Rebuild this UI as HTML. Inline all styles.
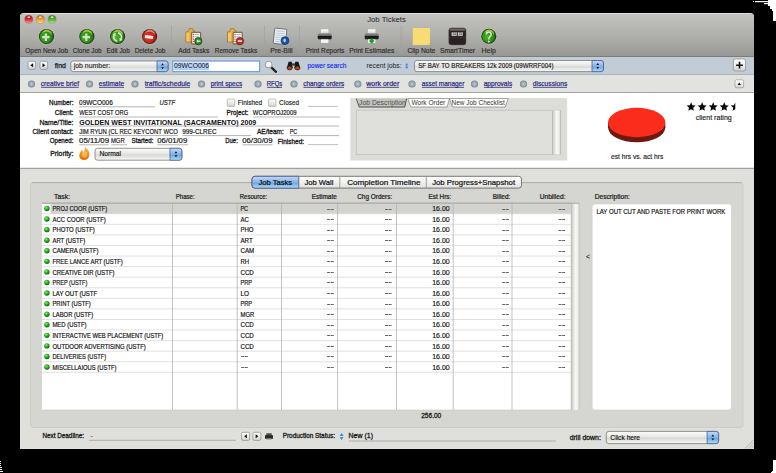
<!DOCTYPE html>
<html><head><meta charset="utf-8"><title>Job Tickets</title>
<style>
html,body{margin:0;padding:0;background:#000;width:776px;height:473px;overflow:hidden}
svg{display:block}
text{font-family:"Liberation Sans",sans-serif}
</style></head>
<body>
<svg width="776" height="473" viewBox="0 0 776 473">
<defs>

<linearGradient id="gTool" x1="0" y1="0" x2="0" y2="1">
  <stop offset="0" stop-color="#c3c3bf"/><stop offset="0.5" stop-color="#b1b1ad"/><stop offset="1" stop-color="#979793"/>
</linearGradient>
<linearGradient id="gRed" x1="0" y1="0" x2="0" y2="1">
  <stop offset="0" stop-color="#a01010"/><stop offset="0.5" stop-color="#e02a2a"/><stop offset="1" stop-color="#ff9a9a"/>
</linearGradient>
<linearGradient id="gOrg" x1="0" y1="0" x2="0" y2="1">
  <stop offset="0" stop-color="#b06008"/><stop offset="0.5" stop-color="#eea030"/><stop offset="1" stop-color="#ffe07a"/>
</linearGradient>
<linearGradient id="gGrn" x1="0" y1="0" x2="0" y2="1">
  <stop offset="0" stop-color="#2e7a14"/><stop offset="0.5" stop-color="#5cae38"/><stop offset="1" stop-color="#b0e888"/>
</linearGradient>
<radialGradient id="gBall" cx="0.4" cy="0.55" r="0.65">
  <stop offset="0" stop-color="#4cb828"/><stop offset="0.6" stop-color="#2c9214"/><stop offset="1" stop-color="#16600a"/>
</radialGradient>
<radialGradient id="gBallR" cx="0.4" cy="0.55" r="0.65">
  <stop offset="0" stop-color="#e8483a"/><stop offset="0.6" stop-color="#c8221a"/><stop offset="1" stop-color="#801008"/>
</radialGradient>
<linearGradient id="gBtn" x1="0" y1="0" x2="0" y2="1">
  <stop offset="0" stop-color="#ffffff"/><stop offset="0.5" stop-color="#ececea"/><stop offset="1" stop-color="#d2d2d0"/>
</linearGradient>
<linearGradient id="gPop" x1="0" y1="0" x2="0" y2="1">
  <stop offset="0" stop-color="#fdfdfd"/><stop offset="0.45" stop-color="#e6e6e3"/><stop offset="0.55" stop-color="#d9d9d6"/><stop offset="1" stop-color="#f8f8f8"/>
</linearGradient>
<linearGradient id="gStep" x1="0" y1="0" x2="0" y2="1">
  <stop offset="0" stop-color="#c6dcf6"/><stop offset="0.45" stop-color="#8ab4e6"/><stop offset="0.55" stop-color="#6fa0de"/><stop offset="1" stop-color="#b6e2fa"/>
</linearGradient>
<linearGradient id="gSeg" x1="0" y1="0" x2="0" y2="1">
  <stop offset="0" stop-color="#ffffff"/><stop offset="0.5" stop-color="#f0f0ee"/><stop offset="1" stop-color="#e2e2e0"/>
</linearGradient>
<linearGradient id="gSegB" x1="0" y1="0" x2="0" y2="1">
  <stop offset="0" stop-color="#c4dcf6"/><stop offset="0.45" stop-color="#8ab8ec"/><stop offset="0.6" stop-color="#74a8e4"/><stop offset="0.9" stop-color="#9ad4f4"/><stop offset="1" stop-color="#c0f4ff"/>
</linearGradient>
<linearGradient id="gScroll" x1="0" y1="0" x2="1" y2="0">
  <stop offset="0" stop-color="#b0b0ac"/><stop offset="0.18" stop-color="#d4d4d0"/><stop offset="0.55" stop-color="#f8f8f6"/><stop offset="0.85" stop-color="#ececea"/><stop offset="1" stop-color="#b4b4b0"/>
</linearGradient>
<radialGradient id="gLink" cx="0.5" cy="0.5" r="0.55">
  <stop offset="0" stop-color="#d4dae0"/><stop offset="0.3" stop-color="#a8b4c0"/><stop offset="0.75" stop-color="#8896a6"/><stop offset="1" stop-color="#687484"/>
</radialGradient>
<radialGradient id="gDot" cx="0.4" cy="0.35" r="0.65">
  <stop offset="0" stop-color="#9af07a"/><stop offset="0.5" stop-color="#22b01a"/><stop offset="1" stop-color="#0a6a08"/>
</radialGradient>
<linearGradient id="gFlame" x1="0" y1="0" x2="0" y2="1">
  <stop offset="0" stop-color="#ffc060"/><stop offset="0.6" stop-color="#f08a1a"/><stop offset="1" stop-color="#d86a0a"/>
</linearGradient>

<linearGradient id="gPaper" x1="0" y1="0" x2="0" y2="1"><stop offset="0" stop-color="#ffffff"/><stop offset="1" stop-color="#d0d0ce"/></linearGradient>
<linearGradient id="gPrn" x1="0" y1="0" x2="0" y2="1"><stop offset="0" stop-color="#909090"/><stop offset="0.42" stop-color="#666666"/><stop offset="0.52" stop-color="#121212"/><stop offset="0.85" stop-color="#262626"/><stop offset="1" stop-color="#505050"/></linearGradient>
</defs>
<rect x="0" y="0" width="776" height="473" fill="#000" />
<rect x="753" y="1" width="1" height="1" fill="#fff" />
<rect x="755" y="1" width="13" height="1.2" fill="#fff" />
<rect x="764" y="3" width="4" height="1.2" fill="#fff" />
<path d="M768,0 H776 V21 H773 V11 H772 V9 H770 V6 H768 Z" fill="#fff"/>
<rect x="0" y="461" width="1" height="1" fill="#fff" />
<rect x="0" y="463" width="1" height="1" fill="#fff" />
<rect x="0" y="465" width="1" height="1" fill="#fff" />
<rect x="0" y="467" width="2" height="1" fill="#fff" />
<rect x="0" y="469" width="2" height="1" fill="#fff" />
<rect x="0" y="471" width="3" height="1" fill="#fff" />
<path d="M773,460 H776 V473 H771 V472 H772 V471 H773 Z" fill="#fff"/>
<path d="M20,17 Q20,13 24,13 H750 Q754,13 754,17 V449 H20 Z" fill="#dfe0dc"/>
<path d="M20,17 Q20,13 24,13 H750 Q754,13 754,17 V56 H20 Z" fill="url(#gTool)"/>
<line x1="24" y1="13.5" x2="750" y2="13.5" stroke="#e2e2e0" stroke-width="1" />
<line x1="20" y1="56.5" x2="754" y2="56.5" stroke="#7c7c7a" stroke-width="1" />
<rect x="20" y="57" width="734" height="17.5" fill="#c2ccd6" />
<line x1="20" y1="74.5" x2="754" y2="74.5" stroke="#aab2ba" stroke-width="1" />
<rect x="20" y="75" width="734" height="17.5" fill="#e2e2de" />
<line x1="20" y1="92.5" x2="754" y2="92.5" stroke="#a4a4a2" stroke-width="1" />
<rect x="20" y="93" width="734" height="75" fill="#ffffff" />
<line x1="20" y1="168.3" x2="754" y2="168.3" stroke="#909090" stroke-width="1" />
<circle cx="28.8" cy="19.4" r="4.1" fill="url(#gRed)" stroke="#7a7a78" stroke-width="0.35"/>
<ellipse cx="28.8" cy="17.2" rx="1.5" ry="0.9" fill="#ffffff" opacity="0.75"/>
<circle cx="40.3" cy="19.4" r="4.1" fill="url(#gOrg)" stroke="#7a7a78" stroke-width="0.35"/>
<ellipse cx="40.3" cy="17.2" rx="1.5" ry="0.9" fill="#ffffff" opacity="0.75"/>
<circle cx="52.1" cy="19.4" r="4.1" fill="url(#gGrn)" stroke="#7a7a78" stroke-width="0.35"/>
<ellipse cx="52.1" cy="17.2" rx="1.5" ry="0.9" fill="#ffffff" opacity="0.75"/>
<text x="367.20" y="22.40" font-size="8" font-weight="normal" font-style="normal" fill="#262626" textLength="38.70" lengthAdjust="spacingAndGlyphs" >Job Tickets</text>
<line x1="171.5" y1="25.5" x2="171.5" y2="54" stroke="#a2a2a0" stroke-width="0.8" />
<line x1="264.5" y1="25.5" x2="264.5" y2="54" stroke="#a2a2a0" stroke-width="0.8" />
<line x1="299.5" y1="25.5" x2="299.5" y2="54" stroke="#a2a2a0" stroke-width="0.8" />
<line x1="401.2" y1="25.5" x2="401.2" y2="54" stroke="#a2a2a0" stroke-width="0.8" />
<text x="25.30" y="52.60" font-size="7.6" font-weight="normal" font-style="normal" fill="#2a2a2a" textLength="42.75" lengthAdjust="spacingAndGlyphs"  stroke="#2a2a2a" stroke-width="0.15">Open New Job</text>
<text x="72.80" y="52.60" font-size="7.6" font-weight="normal" font-style="normal" fill="#2a2a2a" textLength="28.75" lengthAdjust="spacingAndGlyphs"  stroke="#2a2a2a" stroke-width="0.15">Clone Job</text>
<text x="106.60" y="52.60" font-size="7.6" font-weight="normal" font-style="normal" fill="#2a2a2a" textLength="23.10" lengthAdjust="spacingAndGlyphs"  stroke="#2a2a2a" stroke-width="0.15">Edit Job</text>
<text x="134.70" y="52.60" font-size="7.6" font-weight="normal" font-style="normal" fill="#2a2a2a" textLength="30.60" lengthAdjust="spacingAndGlyphs"  stroke="#2a2a2a" stroke-width="0.15">Delete Job</text>
<text x="178.20" y="52.60" font-size="7.6" font-weight="normal" font-style="normal" fill="#2a2a2a" textLength="31.10" lengthAdjust="spacingAndGlyphs"  stroke="#2a2a2a" stroke-width="0.15">Add Tasks</text>
<text x="214.70" y="52.60" font-size="7.6" font-weight="normal" font-style="normal" fill="#2a2a2a" textLength="42.50" lengthAdjust="spacingAndGlyphs"  stroke="#2a2a2a" stroke-width="0.15">Remove Tasks</text>
<text x="270.30" y="52.60" font-size="7.6" font-weight="normal" font-style="normal" fill="#2a2a2a" textLength="22.25" lengthAdjust="spacingAndGlyphs"  stroke="#2a2a2a" stroke-width="0.15">Pre-Bill</text>
<text x="305.70" y="52.60" font-size="7.6" font-weight="normal" font-style="normal" fill="#2a2a2a" textLength="38.60" lengthAdjust="spacingAndGlyphs"  stroke="#2a2a2a" stroke-width="0.15">Print Reports</text>
<text x="349.20" y="52.60" font-size="7.6" font-weight="normal" font-style="normal" fill="#2a2a2a" textLength="45.10" lengthAdjust="spacingAndGlyphs"  stroke="#2a2a2a" stroke-width="0.15">Print Estimates</text>
<text x="407.45" y="52.60" font-size="7.6" font-weight="normal" font-style="normal" fill="#2a2a2a" textLength="27.85" lengthAdjust="spacingAndGlyphs"  stroke="#2a2a2a" stroke-width="0.15">Clip Note</text>
<text x="439.95" y="52.60" font-size="7.6" font-weight="normal" font-style="normal" fill="#2a2a2a" textLength="35.10" lengthAdjust="spacingAndGlyphs"  stroke="#2a2a2a" stroke-width="0.15">SmartTimer</text>
<text x="481.60" y="52.60" font-size="7.6" font-weight="normal" font-style="normal" fill="#2a2a2a" textLength="14.30" lengthAdjust="spacingAndGlyphs"  stroke="#2a2a2a" stroke-width="0.15">Help</text>
<circle cx="46.5" cy="36.5" r="8.5" fill="#c8c8c4" opacity="0.35"/>
<circle cx="46.5" cy="36.5" r="7.6" fill="#28301c"/>
<circle cx="46.5" cy="36.5" r="6.8" fill="url(#gBall)"/>
<path d="M42.0,33.3 A6.3,6.3 0 0 1 51.7,35.0 A4.8,4.3999999999999995 0 0 0 42.0,33.3 Z" fill="#b8e050" opacity="0.75"/>
<path d="M44.8,33.5 h2.2 v2.6 h2.6 v2.2 h-2.6 v2.6 h-2.2 v-2.6 h-2.6 v-2.2 h2.6 Z" fill="#d2dcc6"/>
<circle cx="86.9" cy="36.5" r="8.5" fill="#c8c8c4" opacity="0.35"/>
<circle cx="86.9" cy="36.5" r="7.6" fill="#28301c"/>
<circle cx="86.9" cy="36.5" r="6.8" fill="url(#gBall)"/>
<path d="M82.4,33.3 A6.3,6.3 0 0 1 92.10000000000001,35.0 A4.8,4.3999999999999995 0 0 0 82.4,33.3 Z" fill="#b8e050" opacity="0.75"/>
<path d="M85.2,33.5 h2.2 v2.6 h2.6 v2.2 h-2.6 v2.6 h-2.2 v-2.6 h-2.6 v-2.2 h2.6 Z" fill="#d2dcc6"/>
<circle cx="117.6" cy="36.5" r="8.5" fill="#c8c8c4" opacity="0.35"/>
<circle cx="117.6" cy="36.5" r="7.6" fill="#28301c"/>
<circle cx="117.6" cy="36.5" r="6.8" fill="url(#gBall)"/>
<path d="M113.1,33.3 A6.3,6.3 0 0 1 122.8,35.0 A4.8,4.3999999999999995 0 0 0 113.1,33.3 Z" fill="#b8e050" opacity="0.75"/>
<path d="M117.25,40.98 A4.0,4.0 0 0 1 114.32,34.71" fill="none" stroke="#d4e4c4" stroke-width="1.8"/>
<path d="M115.64,32.82 L115.76,36.32 L112.32,33.91 Z" fill="#d4e4c4"/>
<path d="M117.95,33.02 A4.0,4.0 0 0 1 120.88,39.29" fill="none" stroke="#d4e4c4" stroke-width="1.8"/>
<path d="M119.56,41.18 L119.44,37.68 L122.88,40.09 Z" fill="#d4e4c4"/>
<circle cx="149.6" cy="36.5" r="8.5" fill="#c8c8c4" opacity="0.35"/>
<circle cx="149.6" cy="36.5" r="7.6" fill="#28301c"/>
<circle cx="149.6" cy="36.5" r="6.8" fill="url(#gBallR)"/>
<path d="M145.1,33.3 A6.3,6.3 0 0 1 154.79999999999998,35.0 A4.8,4.3999999999999995 0 0 0 145.1,33.3 Z" fill="#ff9a90" opacity="0.75"/>
<path d="M145,35 L153.2,35.9 L153,38.9 L144.8,38 Z" fill="#f0e8e4"/>
<path d="M185.9,31.8 h2.2 l1.2,-3.2 h3 l1,2.2 h1.2 v11.2 h-8.6 Z" fill="#e6b040" stroke="#8a6420" stroke-width="0.6"/>
<rect x="186.4" y="32.6" width="3" height="9" fill="#f6d070" opacity="0.7"/>
<rect x="191.29999999999998" y="32" width="9.6" height="12.2" rx="1" fill="#9a7040" stroke="#6a4a20" stroke-width="0.4"/>
<rect x="192.2" y="33" width="7.8" height="10.2" fill="#f2f4f6"/>
<rect x="192.79999999999998" y="34.0" width="1.2" height="1.1" fill="#d03030"/>
<rect x="194.6" y="34.2" width="4.6" height="0.7" fill="#8aa0c0"/>
<rect x="192.79999999999998" y="36.3" width="1.2" height="1.1" fill="#d03030"/>
<rect x="194.6" y="36.5" width="4.6" height="0.7" fill="#8aa0c0"/>
<rect x="192.79999999999998" y="38.6" width="1.2" height="1.1" fill="#d03030"/>
<rect x="194.6" y="38.800000000000004" width="4.6" height="0.7" fill="#8aa0c0"/>
<rect x="192.79999999999998" y="40.9" width="1.2" height="1.1" fill="#d03030"/>
<rect x="194.6" y="41.1" width="4.6" height="0.7" fill="#8aa0c0"/>
<circle cx="198.29999999999998" cy="41.1" r="3.7" fill="#2a8a22" stroke="#1a2a10" stroke-width="0.6"/>
<path d="M196.4,41.1 l1.8,-1.8 v1.1 h2.2 v1.4 h-2.2 v1.1 Z" fill="#e8f0e0"/>
<path d="M227.5,31.8 h2.2 l1.2,-3.2 h3 l1,2.2 h1.2 v11.2 h-8.6 Z" fill="#e6b040" stroke="#8a6420" stroke-width="0.6"/>
<rect x="228.0" y="32.6" width="3" height="9" fill="#f6d070" opacity="0.7"/>
<rect x="232.89999999999998" y="32" width="9.6" height="12.2" rx="1" fill="#9a7040" stroke="#6a4a20" stroke-width="0.4"/>
<rect x="233.79999999999998" y="33" width="7.8" height="10.2" fill="#f2f4f6"/>
<rect x="234.39999999999998" y="34.0" width="1.2" height="1.1" fill="#d03030"/>
<rect x="236.2" y="34.2" width="4.6" height="0.7" fill="#8aa0c0"/>
<rect x="234.39999999999998" y="36.3" width="1.2" height="1.1" fill="#d03030"/>
<rect x="236.2" y="36.5" width="4.6" height="0.7" fill="#8aa0c0"/>
<rect x="234.39999999999998" y="38.6" width="1.2" height="1.1" fill="#d03030"/>
<rect x="236.2" y="38.800000000000004" width="4.6" height="0.7" fill="#8aa0c0"/>
<rect x="234.39999999999998" y="40.9" width="1.2" height="1.1" fill="#d03030"/>
<rect x="236.2" y="41.1" width="4.6" height="0.7" fill="#8aa0c0"/>
<circle cx="239.89999999999998" cy="41.1" r="3.7" fill="#d02a22" stroke="#1a2a10" stroke-width="0.6"/>
<rect x="237.79999999999998" y="40.3" width="4.2" height="1.6" fill="#f0e0e0"/>
<g transform="rotate(6 280 36)"><rect x="274" y="28.6" width="12.2" height="15.4" rx="0.8" fill="#e4ecf2" stroke="#6e6e6e" stroke-width="0.9"/><rect x="275.8" y="31.0" width="8.6" height="0.6" fill="#b0bcc8"/><rect x="275.8" y="33.1" width="8.6" height="0.6" fill="#b0bcc8"/><rect x="275.8" y="35.2" width="8.6" height="0.6" fill="#b0bcc8"/><rect x="275.8" y="37.3" width="8.6" height="0.6" fill="#b0bcc8"/><rect x="275.8" y="39.4" width="8.6" height="0.6" fill="#b0bcc8"/><rect x="275.8" y="41.5" width="8.6" height="0.6" fill="#b0bcc8"/></g>
<circle cx="285" cy="40.6" r="3.9" fill="#1a52a8" stroke="#0c2c6a" stroke-width="0.7"/>
<ellipse cx="284.6" cy="40.4" rx="1.2" ry="1.8" fill="#d8e8f4" opacity="0.9"/>
<rect x="321.0" y="29.3" width="7.4" height="4.4" fill="url(#gPaper)"/>
<rect x="317.7" y="33.2" width="14" height="6.4" rx="1.6" fill="url(#gPrn)"/>
<rect x="321.0" y="39.4" width="7.4" height="3.5" fill="#f6f6f4"/>
<rect x="368.0" y="29.3" width="7.4" height="4.4" fill="url(#gPaper)"/>
<rect x="364.7" y="33.2" width="14" height="6.4" rx="1.6" fill="url(#gPrn)"/>
<rect x="368.0" y="39.4" width="7.4" height="3.5" fill="#f6f6f4"/>
<path d="M371.7,38.3 L374.5,41 L371.7,43.8 L368.9,41 Z" fill="#1aa02a"/>
<rect x="412.8" y="28" width="17.2" height="17" fill="#f6dc72" />
<path d="M412.8,45 H428 L430,43 V45 Z" fill="#c8b050" opacity="0.6"/>
<rect x="448.8" y="27.9" width="17.2" height="17" rx="2.5" fill="#2a2222" stroke="#5a5454" stroke-width="0.5"/>
<rect x="449.6" y="28.6" width="15.6" height="2.2" rx="1.2" fill="#6a6464"/>
<rect x="451.6" y="32.2" width="5.2" height="3.6" fill="#d8d8d8"/><rect x="457.8" y="32.2" width="5" height="3.6" fill="#d8d8d8"/>
<text x="454.2" y="35.2" font-size="3.4" font-weight="bold" fill="#333" text-anchor="middle">10</text>
<text x="460.3" y="35.2" font-size="3.4" font-weight="bold" fill="#333" text-anchor="middle">15</text>
<line x1="449.5" y1="37.2" x2="465.5" y2="37.2" stroke="#4a4242" stroke-width="0.6" />
<circle cx="488.8" cy="36.3" r="8.4" fill="#c8c8c4" opacity="0.35"/>
<circle cx="488.8" cy="36.3" r="7.5" fill="#28301c"/>
<circle cx="488.8" cy="36.3" r="6.7" fill="url(#gBall)"/>
<path d="M484.3,33.099999999999994 A6.2,6.2 0 0 1 494.0,34.8 A4.7,4.3 0 0 0 484.3,33.099999999999994 Z" fill="#b8e050" opacity="0.75"/>
<path d="M486.3,34.4 A2.45,2.45 0 0 1 491.2,34.4 Q491.2,35.9 489.6,36.8 Q488.8,37.4 488.8,39.4" fill="none" stroke="#dce8d4" stroke-width="1.5"/>
<circle cx="488.8" cy="41.5" r="0.95" fill="#dce8d4"/>
<rect x="28" y="61.3" width="7.6" height="8" fill="url(#gBtn)" rx="1.5" stroke="#8a8a88" stroke-width="0.7" />
<path d="M33.1,63.3 L30.3,65.3 L33.1,67.3 Z" fill="#111"/>
<rect x="40" y="61.3" width="7.6" height="8" fill="url(#gBtn)" rx="1.5" stroke="#8a8a88" stroke-width="0.7" />
<path d="M42.5,63.3 L45.3,65.3 L42.5,67.3 Z" fill="#111"/>
<text x="54.70" y="67.80" font-size="7.2" font-weight="normal" font-style="normal" fill="#1a1a1a" textLength="11.20" lengthAdjust="spacingAndGlyphs"  stroke="#1a1a1a" stroke-width="0.25">find</text>
<rect x="70.8" y="61" width="97.3" height="10.599999999999994" fill="url(#gPop)" rx="2.5" stroke="#7a7a78" stroke-width="0.8" />
<path d="M157,61 H165.6 Q168.1,61 168.1,63.5 V69.1 Q168.1,71.6 165.6,71.6 H157 Z" fill="url(#gSegB)" stroke="#4e5a94" stroke-width="0.8"/>
<path d="M161.15,65.3 L162.55,63.3 L163.95000000000002,65.3 Z M161.15,67.3 L162.55,69.3 L163.95000000000002,67.3 Z" fill="#111"/>
<text x="73.70" y="67.60" font-size="7.4" font-weight="normal" font-style="normal" fill="#222" textLength="36.60" lengthAdjust="spacingAndGlyphs"  stroke="#222" stroke-width="0.1">job number:</text>
<rect x="172.8" y="61" width="86.8" height="10.6" fill="#ffffff" stroke="#7aa2d8" stroke-width="1.3" />
<rect x="174.2" y="62.4" width="34.8" height="7.8" fill="#b4d0f4" />
<text x="174.10" y="68.20" font-size="7.4" font-weight="normal" font-style="normal" fill="#101010" textLength="34.95" lengthAdjust="spacingAndGlyphs" >09WCO006</text>
<line x1="271.6" y1="67.6" x2="276" y2="71.8" stroke="#222" stroke-width="2.3" stroke-linecap="round"/>
<circle cx="268.6" cy="64.6" r="3.3" fill="#f6f6f6" stroke="#a0a0a0" stroke-width="1.1"/>
<path d="M286.8,68 L288.6,61.8 L291.8,61.8 L292.6,68 Z M294.4,68 L295.2,61.8 L298.4,61.8 L300.2,68 Z" fill="#161616"/>
<rect x="291.5" y="63.4" width="3.8" height="2.2" fill="#3a3a3a"/>
<ellipse cx="289.6" cy="68" rx="2.6" ry="1.9" fill="#b8480c" stroke="#161616" stroke-width="0.7"/>
<ellipse cx="297.4" cy="68" rx="2.6" ry="1.9" fill="#b8480c" stroke="#161616" stroke-width="0.7"/>
<text x="307.45" y="68.30" font-size="7.6" font-weight="normal" font-style="normal" fill="#0a1cf4" textLength="38.85" lengthAdjust="spacingAndGlyphs"  stroke="#0a1cf4" stroke-width="0.12">power search</text>
<text x="366.60" y="68.30" font-size="7.4" font-weight="normal" font-style="normal" fill="#1a1a1a" textLength="34.95" lengthAdjust="spacingAndGlyphs" >recent jobs:</text>
<path d="M405,65.5 L406.7,63 L408.4,65.5 Z M405,66.6 L406.7,69.1 L408.4,66.6 Z" fill="#3a8ae0"/>
<rect x="414.4" y="60.5" width="189.10000000000002" height="11.099999999999994" fill="url(#gPop)" rx="2.5" stroke="#7a7a78" stroke-width="0.8" />
<path d="M592,60.5 H601.0 Q603.5,60.5 603.5,63.0 V69.1 Q603.5,71.6 601.0,71.6 H592 Z" fill="url(#gSegB)" stroke="#4e5a94" stroke-width="0.8"/>
<path d="M596.35,65.05 L597.75,63.05 L599.15,65.05 Z M596.35,67.05 L597.75,69.05 L599.15,67.05 Z" fill="#111"/>
<text x="418.20" y="68.10" font-size="7.4" font-weight="normal" font-style="normal" fill="#141414" textLength="135.40" lengthAdjust="spacingAndGlyphs"  stroke="#141414" stroke-width="0.14">SF BAY TO BREAKERS 12k 2009 (09WRRF004)</text>
<rect x="733.4" y="59" width="12.2" height="12" fill="url(#gBtn)" rx="2" stroke="#8a8a88" stroke-width="0.7" />
<path d="M738.7,61.8 h1.6 v2.6 h2.6 v1.6 h-2.6 v2.6 h-1.6 v-2.6 h-2.6 v-1.6 h2.6 Z" fill="#111"/>
<circle cx="31.5" cy="84" r="3.6" fill="url(#gLink)"/>
<text x="40.70" y="85.90" font-size="7.4" font-weight="normal" font-style="normal" fill="#1c1c7c" textLength="38.35" lengthAdjust="spacingAndGlyphs"  stroke="#1c1c7c" stroke-width="0.2">creative brief</text>
<line x1="41" y1="87.3" x2="78.75" y2="87.3" stroke="#22227a" stroke-width="0.8" />
<circle cx="89.5" cy="84" r="3.6" fill="url(#gLink)"/>
<text x="98.70" y="85.90" font-size="7.4" font-weight="normal" font-style="normal" fill="#1c1c7c" textLength="25.60" lengthAdjust="spacingAndGlyphs"  stroke="#1c1c7c" stroke-width="0.2">estimate</text>
<line x1="99" y1="87.3" x2="124" y2="87.3" stroke="#22227a" stroke-width="0.8" />
<circle cx="135" cy="84" r="3.6" fill="url(#gLink)"/>
<text x="144.70" y="85.90" font-size="7.4" font-weight="normal" font-style="normal" fill="#1c1c7c" textLength="45.60" lengthAdjust="spacingAndGlyphs"  stroke="#1c1c7c" stroke-width="0.2">traffic/schedule</text>
<line x1="145" y1="87.3" x2="190" y2="87.3" stroke="#22227a" stroke-width="0.8" />
<circle cx="201.5" cy="84" r="3.6" fill="url(#gLink)"/>
<text x="210.70" y="85.90" font-size="7.4" font-weight="normal" font-style="normal" fill="#1c1c7c" textLength="31.60" lengthAdjust="spacingAndGlyphs"  stroke="#1c1c7c" stroke-width="0.2">print specs</text>
<line x1="211" y1="87.3" x2="242" y2="87.3" stroke="#22227a" stroke-width="0.8" />
<circle cx="258" cy="84" r="3.6" fill="url(#gLink)"/>
<text x="266.70" y="85.90" font-size="7.4" font-weight="normal" font-style="normal" fill="#1c1c7c" textLength="15.60" lengthAdjust="spacingAndGlyphs"  stroke="#1c1c7c" stroke-width="0.2">RFQs</text>
<line x1="267" y1="87.3" x2="282" y2="87.3" stroke="#22227a" stroke-width="0.8" />
<circle cx="294" cy="84" r="3.6" fill="url(#gLink)"/>
<text x="303.20" y="85.90" font-size="7.4" font-weight="normal" font-style="normal" fill="#1c1c7c" textLength="41.10" lengthAdjust="spacingAndGlyphs"  stroke="#1c1c7c" stroke-width="0.2">change orders</text>
<line x1="303.5" y1="87.3" x2="344" y2="87.3" stroke="#22227a" stroke-width="0.8" />
<circle cx="357.8" cy="84" r="3.6" fill="url(#gLink)"/>
<text x="366.20" y="85.90" font-size="7.4" font-weight="normal" font-style="normal" fill="#1c1c7c" textLength="33.10" lengthAdjust="spacingAndGlyphs"  stroke="#1c1c7c" stroke-width="0.2">work order</text>
<line x1="366.5" y1="87.3" x2="399" y2="87.3" stroke="#22227a" stroke-width="0.8" />
<circle cx="412" cy="84" r="3.6" fill="url(#gLink)"/>
<text x="421.70" y="85.90" font-size="7.4" font-weight="normal" font-style="normal" fill="#1c1c7c" textLength="42.60" lengthAdjust="spacingAndGlyphs"  stroke="#1c1c7c" stroke-width="0.2">asset manager</text>
<line x1="422" y1="87.3" x2="464" y2="87.3" stroke="#22227a" stroke-width="0.8" />
<circle cx="474.5" cy="84" r="3.6" fill="url(#gLink)"/>
<text x="483.70" y="85.90" font-size="7.4" font-weight="normal" font-style="normal" fill="#1c1c7c" textLength="28.60" lengthAdjust="spacingAndGlyphs"  stroke="#1c1c7c" stroke-width="0.2">approvals</text>
<line x1="484" y1="87.3" x2="512" y2="87.3" stroke="#22227a" stroke-width="0.8" />
<circle cx="523.5" cy="84" r="3.6" fill="url(#gLink)"/>
<text x="532.70" y="85.90" font-size="7.4" font-weight="normal" font-style="normal" fill="#1c1c7c" textLength="34.60" lengthAdjust="spacingAndGlyphs"  stroke="#1c1c7c" stroke-width="0.2">discussions</text>
<line x1="533" y1="87.3" x2="567" y2="87.3" stroke="#22227a" stroke-width="0.8" />
<rect x="735" y="79.8" width="8.6" height="8" fill="url(#gBtn)" rx="1.5" stroke="#8a8a88" stroke-width="0.6" />
<path d="M737.6,85 L739.3,82.6 L741,85 Z" fill="#111"/>
<text x="49.10" y="104.70" font-size="7.2" font-weight="normal" font-style="normal" fill="#202020" textLength="24.30" lengthAdjust="spacingAndGlyphs"  stroke="#202020" stroke-width="0.32">Number:</text>
<text x="54.70" y="115.30" font-size="7.2" font-weight="normal" font-style="normal" fill="#202020" textLength="18.70" lengthAdjust="spacingAndGlyphs"  stroke="#202020" stroke-width="0.32">Client:</text>
<text x="39.45" y="124.80" font-size="7.2" font-weight="normal" font-style="normal" fill="#202020" textLength="33.95" lengthAdjust="spacingAndGlyphs"  stroke="#202020" stroke-width="0.32">Name/Title:</text>
<text x="32.45" y="134.20" font-size="7.2" font-weight="normal" font-style="normal" fill="#202020" textLength="40.95" lengthAdjust="spacingAndGlyphs"  stroke="#202020" stroke-width="0.32">Client contact:</text>
<text x="49.70" y="143.30" font-size="7.2" font-weight="normal" font-style="normal" fill="#202020" textLength="23.70" lengthAdjust="spacingAndGlyphs"  stroke="#202020" stroke-width="0.32">Opened:</text>
<text x="50.30" y="155.60" font-size="7.2" font-weight="normal" font-style="normal" fill="#202020" textLength="23.10" lengthAdjust="spacingAndGlyphs"  stroke="#202020" stroke-width="0.32">Priority:</text>
<text x="79.10" y="104.90" font-size="7.2" font-weight="normal" font-style="normal" fill="#141414" textLength="33.70" lengthAdjust="spacingAndGlyphs"  stroke="#141414" stroke-width="0.18">09WCO006</text>
<line x1="79" y1="106.8" x2="155" y2="106.8" stroke="#acacac" stroke-width="0.9" />
<text x="159.45" y="105.00" font-size="7.2" font-weight="normal" font-style="italic" fill="#222" textLength="15.85" lengthAdjust="spacingAndGlyphs"  stroke="#222" stroke-width="0.2">USTF</text>
<text x="79.20" y="115.40" font-size="7.2" font-weight="normal" font-style="normal" fill="#141414" textLength="49.10" lengthAdjust="spacingAndGlyphs"  stroke="#141414" stroke-width="0.18">WEST COST ORG</text>
<line x1="79" y1="117" x2="218" y2="117" stroke="#b0b0b0" stroke-width="0.9" />
<line x1="253" y1="117" x2="340" y2="117" stroke="#b0b0b0" stroke-width="0.9" />
<text x="79.20" y="124.80" font-size="7.7" font-weight="bold" font-style="normal" fill="#101010" textLength="177.10" lengthAdjust="spacingAndGlyphs" >GOLDEN WEST INVITATIONAL (SACRAMENTO) 2009</text>
<line x1="79" y1="126" x2="339" y2="126" stroke="#acacac" stroke-width="0.9" />
<text x="79.20" y="134.30" font-size="7.2" font-weight="normal" font-style="normal" fill="#141414" textLength="98.60" lengthAdjust="spacingAndGlyphs"  stroke="#141414" stroke-width="0.18">JIM RYUN (CL REC KEYCONT WCO</text>
<line x1="79" y1="135.6" x2="178" y2="135.6" stroke="#acacac" stroke-width="0.9" />
<text x="182.20" y="134.30" font-size="7.2" font-weight="normal" font-style="normal" fill="#141414" textLength="34.35" lengthAdjust="spacingAndGlyphs"  stroke="#141414" stroke-width="0.18">999-CLREC</text>
<line x1="182.5" y1="135.6" x2="251" y2="135.6" stroke="#acacac" stroke-width="0.9" />
<text x="79.10" y="143.30" font-size="7.2" font-weight="normal" font-style="normal" fill="#141414" textLength="29.95" lengthAdjust="spacingAndGlyphs"  stroke="#141414" stroke-width="0.18">05/11/09</text>
<line x1="79.4" y1="144.8" x2="108.8" y2="144.8" stroke="#acacac" stroke-width="0.9" />
<text x="110.95" y="143.30" font-size="7.2" font-weight="normal" font-style="normal" fill="#141414" textLength="13.75" lengthAdjust="spacingAndGlyphs"  stroke="#141414" stroke-width="0.18">MGR</text>
<line x1="111.3" y1="144.8" x2="127" y2="144.8" stroke="#acacac" stroke-width="0.9" />
<text x="131.60" y="143.30" font-size="7.2" font-weight="normal" font-style="normal" fill="#202020" textLength="21.80" lengthAdjust="spacingAndGlyphs"  stroke="#202020" stroke-width="0.32">Started:</text>
<text x="157.20" y="143.30" font-size="7.2" font-weight="normal" font-style="normal" fill="#141414" textLength="30.00" lengthAdjust="spacingAndGlyphs"  stroke="#141414" stroke-width="0.18">06/01/09</text>
<line x1="157.3" y1="144.8" x2="188" y2="144.8" stroke="#acacac" stroke-width="0.9" />
<path d="M84,160 C79.5,160 78.5,156 79.8,153 C80.5,151.5 81.5,151 81.5,149.5 C83,151 83,152 83.2,152.5 C84.5,150.5 85.5,148.5 85,146.8 C88,149 90,152.5 89.3,155.5 C88.8,158.5 86.5,160 84,160 Z" fill="url(#gFlame)"/>
<ellipse cx="84.6" cy="154.5" rx="2.6" ry="3.2" fill="#ffd878" opacity="0.55"/>
<rect x="95" y="148.3" width="86.9" height="11.899999999999977" fill="url(#gPop)" rx="2.5" stroke="#7a7a78" stroke-width="0.8" />
<path d="M170,148.3 H179.4 Q181.9,148.3 181.9,150.8 V157.7 Q181.9,160.2 179.4,160.2 H170 Z" fill="url(#gSegB)" stroke="#4e5a94" stroke-width="0.8"/>
<path d="M174.54999999999998,153.25 L175.95,151.25 L177.35,153.25 Z M174.54999999999998,155.25 L175.95,157.25 L177.35,155.25 Z" fill="#111"/>
<text x="99.45" y="156.00" font-size="7.4" font-weight="normal" font-style="normal" fill="#141414" textLength="21.45" lengthAdjust="spacingAndGlyphs"  stroke="#141414" stroke-width="0.18">Normal</text>
<rect x="227.3" y="99" width="7.5" height="7.4" fill="url(#gBtn)" rx="1" stroke="#9a9a9a" stroke-width="0.6" />
<text x="237.80" y="104.60" font-size="7.2" font-weight="normal" font-style="normal" fill="#1a1a1a" textLength="24.40" lengthAdjust="spacingAndGlyphs"  stroke="#1a1a1a" stroke-width="0.15">Finished</text>
<rect x="268.5" y="99" width="7.5" height="7.4" fill="url(#gBtn)" rx="1" stroke="#9a9a9a" stroke-width="0.6" />
<text x="279.10" y="104.60" font-size="7.2" font-weight="normal" font-style="normal" fill="#1a1a1a" textLength="19.95" lengthAdjust="spacingAndGlyphs"  stroke="#1a1a1a" stroke-width="0.15">Closed</text>
<line x1="307.8" y1="106.4" x2="337.5" y2="106.4" stroke="#b0b0b0" stroke-width="0.8" />
<text x="226.60" y="115.20" font-size="7.2" font-weight="normal" font-style="normal" fill="#202020" textLength="21.60" lengthAdjust="spacingAndGlyphs"  stroke="#202020" stroke-width="0.32">Project:</text>
<text x="252.80" y="115.30" font-size="7.2" font-weight="normal" font-style="normal" fill="#141414" textLength="43.75" lengthAdjust="spacingAndGlyphs"  stroke="#141414" stroke-width="0.18">WCOPROJ2009</text>
<text x="256.95" y="134.00" font-size="7.2" font-weight="normal" font-style="normal" fill="#202020" textLength="26.85" lengthAdjust="spacingAndGlyphs"  stroke="#202020" stroke-width="0.32">AE/team:</text>
<text x="289.70" y="134.10" font-size="7.2" font-weight="normal" font-style="normal" fill="#141414" textLength="7.50" lengthAdjust="spacingAndGlyphs"  stroke="#141414" stroke-width="0.18">PC</text>
<line x1="290" y1="135.6" x2="339" y2="135.6" stroke="#acacac" stroke-width="0.9" />
<text x="225.30" y="143.30" font-size="7.2" font-weight="normal" font-style="normal" fill="#202020" textLength="12.50" lengthAdjust="spacingAndGlyphs"  stroke="#202020" stroke-width="0.32">Due:</text>
<text x="242.20" y="143.30" font-size="7.2" font-weight="normal" font-style="normal" fill="#141414" textLength="30.35" lengthAdjust="spacingAndGlyphs"  stroke="#141414" stroke-width="0.18">06/30/09</text>
<line x1="242.5" y1="144.8" x2="272.5" y2="144.8" stroke="#acacac" stroke-width="0.9" />
<text x="277.80" y="143.50" font-size="7.2" font-weight="normal" font-style="normal" fill="#202020" textLength="26.25" lengthAdjust="spacingAndGlyphs"  stroke="#202020" stroke-width="0.32">Finished:</text>
<line x1="308" y1="144.6" x2="338" y2="144.6" stroke="#b0b0b0" stroke-width="0.8" />
<rect x="350.5" y="98" width="216.5" height="62.3" fill="#dcddd9" stroke="#e6e6e4" stroke-width="0.5" />
<path d="M356.2,98.6 L406.6,98.6 L404.8,107 L359.2,107 Z" fill="#c4c4c0"/>
<line x1="359.2" y1="107" x2="404.8" y2="107" stroke="#4a4a48" stroke-width="1.2" />
<path d="M407.8,98.6 L449.5,98.6 L447.2,107 L410.8,107 Z" fill="#fff" stroke="#6a6a68" stroke-width="0.6"/>
<path d="M449.4,98.6 L508.2,98.6 L505.2,107 L452.4,107 Z" fill="#fff" stroke="#6a6a68" stroke-width="0.6"/>
<line x1="356.2" y1="98.6" x2="359.2" y2="107" stroke="#3a3a38" stroke-width="0.8" />
<line x1="406.6" y1="98.6" x2="404.8" y2="107" stroke="#3a3a38" stroke-width="0.8" />
<text x="359.10" y="104.60" font-size="7.2" font-weight="normal" font-style="normal" fill="#505050" textLength="46.80" lengthAdjust="spacingAndGlyphs" >Job Description</text>
<text x="411.45" y="104.60" font-size="7.2" font-weight="normal" font-style="normal" fill="#333" textLength="33.85" lengthAdjust="spacingAndGlyphs" >Work Order</text>
<text x="451.60" y="104.60" font-size="7.2" font-weight="normal" font-style="normal" fill="#333" textLength="53.10" lengthAdjust="spacingAndGlyphs" >New Job Checklist</text>
<rect x="356.3" y="110.2" width="204.4" height="44.3" fill="#dfe0dc" stroke="#b8b8b6" stroke-width="0.6" />
<rect x="552" y="110.4" width="8.6" height="44" fill="url(#gScroll)" />
<ellipse cx="636.7" cy="127.6" rx="28.6" ry="14.7" fill="#6e1810"/>
<rect x="608.1" y="122.5" width="57.2" height="5.1" fill="#6e1810" />
<ellipse cx="636.7" cy="122.5" rx="28.6" ry="14.7" fill="#fb2c1c"/>
<text x="610.95" y="158.50" font-size="7.2" font-weight="normal" font-style="normal" fill="#1a1a1a" textLength="52.45" lengthAdjust="spacingAndGlyphs"  stroke="#1a1a1a" stroke-width="0.15">est hrs vs. act hrs</text>
<polygon points="691.10,102.30 692.40,105.21 695.57,105.55 693.20,107.68 693.86,110.80 691.10,109.21 688.34,110.80 689.00,107.68 686.63,105.55 689.80,105.21" fill="#0a0a0a"/>
<polygon points="702.15,102.30 703.45,105.21 706.62,105.55 704.25,107.68 704.91,110.80 702.15,109.21 699.39,110.80 700.05,107.68 697.68,105.55 700.85,105.21" fill="#0a0a0a"/>
<polygon points="713.20,102.30 714.50,105.21 717.67,105.55 715.30,107.68 715.96,110.80 713.20,109.21 710.44,110.80 711.10,107.68 708.73,105.55 711.90,105.21" fill="#0a0a0a"/>
<polygon points="724.25,102.30 725.55,105.21 728.72,105.55 726.35,107.68 727.01,110.80 724.25,109.21 721.49,110.80 722.15,107.68 719.78,105.55 722.95,105.21" fill="#0a0a0a"/>
<clipPath id="halfclip"><rect x="729.5999999999999" y="101.3" width="5.7" height="11.4"/></clipPath>
<polygon points="735.30,102.30 736.60,105.21 739.77,105.55 737.40,107.68 738.06,110.80 735.30,109.21 732.54,110.80 733.20,107.68 730.83,105.55 734.00,105.21" fill="#0a0a0a" clip-path="url(#halfclip)"/>
<text x="695.70" y="119.60" font-size="7.2" font-weight="normal" font-style="normal" fill="#1a1a1a" textLength="36.10" lengthAdjust="spacingAndGlyphs"  stroke="#1a1a1a" stroke-width="0.15">client rating</text>
<rect x="30.5" y="182.5" width="712.5" height="245" fill="#d5d6d1" rx="2.5" stroke="#c8c9c4" stroke-width="0.8" />
<line x1="32" y1="182.6" x2="741.5" y2="182.6" stroke="#a9aaa6" stroke-width="0.9" />
<rect x="252" y="176.3" width="269.5" height="11.8" fill="url(#gSeg)" rx="2.8" stroke="#6a6a68" stroke-width="0.9" />
<path d="M255,176.3 H298.7 V188.1 H255 Q252,188.1 252,185.1 V179.3 Q252,176.3 255,176.3 Z" fill="url(#gSegB)" stroke="#4e5a94" stroke-width="0.9"/>
<line x1="298.7" y1="176.7" x2="298.7" y2="187.7" stroke="#8a8a88" stroke-width="0.8" />
<line x1="339.8" y1="176.7" x2="339.8" y2="187.7" stroke="#8a8a88" stroke-width="0.8" />
<line x1="426.3" y1="176.7" x2="426.3" y2="187.7" stroke="#8a8a88" stroke-width="0.8" />
<text x="258.45" y="184.80" font-size="7.7" font-weight="normal" font-style="normal" fill="#101010" textLength="33.75" lengthAdjust="spacingAndGlyphs"  stroke="#101010" stroke-width="0.22">Job Tasks</text>
<text x="304.45" y="184.80" font-size="7.7" font-weight="normal" font-style="normal" fill="#141414" textLength="28.95" lengthAdjust="spacingAndGlyphs"  stroke="#141414" stroke-width="0.22">Job Wall</text>
<text x="347.20" y="184.80" font-size="7.7" font-weight="normal" font-style="normal" fill="#141414" textLength="73.35" lengthAdjust="spacingAndGlyphs"  stroke="#141414" stroke-width="0.22">Completion Timeline</text>
<text x="432.20" y="184.80" font-size="7.7" font-weight="normal" font-style="normal" fill="#141414" textLength="82.85" lengthAdjust="spacingAndGlyphs"  stroke="#141414" stroke-width="0.22">Job Progress+Snapshot</text>
<text x="54.10" y="198.80" font-size="6.7" font-weight="normal" font-style="normal" fill="#202020" textLength="15.95" lengthAdjust="spacingAndGlyphs"  stroke="#202020" stroke-width="0.22">Task:</text>
<text x="175.70" y="198.80" font-size="6.7" font-weight="normal" font-style="normal" fill="#202020" textLength="19.00" lengthAdjust="spacingAndGlyphs"  stroke="#202020" stroke-width="0.22">Phase:</text>
<text x="239.70" y="198.80" font-size="6.7" font-weight="normal" font-style="normal" fill="#202020" textLength="27.50" lengthAdjust="spacingAndGlyphs"  stroke="#202020" stroke-width="0.22">Resource:</text>
<text x="311.70" y="198.80" font-size="6.7" font-weight="normal" font-style="normal" fill="#202020" textLength="25.10" lengthAdjust="spacingAndGlyphs"  stroke="#202020" stroke-width="0.22">Estimate</text>
<text x="357.20" y="198.80" font-size="6.7" font-weight="normal" font-style="normal" fill="#202020" textLength="35.00" lengthAdjust="spacingAndGlyphs"  stroke="#202020" stroke-width="0.22">Chg Orders:</text>
<text x="428.45" y="198.80" font-size="6.7" font-weight="normal" font-style="normal" fill="#202020" textLength="22.85" lengthAdjust="spacingAndGlyphs"  stroke="#202020" stroke-width="0.22">Est Hrs:</text>
<text x="492.80" y="198.80" font-size="6.7" font-weight="normal" font-style="normal" fill="#202020" textLength="17.50" lengthAdjust="spacingAndGlyphs"  stroke="#202020" stroke-width="0.22">Billed:</text>
<text x="539.70" y="198.80" font-size="6.7" font-weight="normal" font-style="normal" fill="#202020" textLength="25.85" lengthAdjust="spacingAndGlyphs"  stroke="#202020" stroke-width="0.22">Unbilled:</text>
<text x="594.70" y="198.80" font-size="6.7" font-weight="normal" font-style="normal" fill="#202020" textLength="35.10" lengthAdjust="spacingAndGlyphs"  stroke="#202020" stroke-width="0.22">Description:</text>
<rect x="42" y="203.2" width="529" height="206.8" fill="#ffffff" />
<line x1="42" y1="203.2" x2="571" y2="203.2" stroke="#a0a0a0" stroke-width="0.7" />
<rect x="50.6" y="203.6" width="520.2" height="10.17" fill="#d2d3cf" />
<line x1="42" y1="213.76999999999998" x2="571" y2="213.76999999999998" stroke="#d8d8d8" stroke-width="0.8" />
<circle cx="46.9" cy="208.50" r="2.7" fill="url(#gDot)"/>
<text x="52.45" y="211.10" font-size="6.5" font-weight="normal" font-style="normal" fill="#141414" textLength="54.85" lengthAdjust="spacingAndGlyphs"  stroke="#141414" stroke-width="0.18">PROJ COOR (USTF)</text>
<text x="240.45" y="211.10" font-size="6.5" font-weight="normal" font-style="normal" fill="#141414" textLength="7.60" lengthAdjust="spacingAndGlyphs"  stroke="#141414" stroke-width="0.18">PC</text>
<rect x="327.10" y="209" width="3" height="1" fill="#646464" />
<rect x="330.70" y="209" width="3" height="1" fill="#646464" />
<rect x="385.00" y="209" width="3" height="1" fill="#646464" />
<rect x="388.60" y="209" width="3" height="1" fill="#646464" />
<text x="432.20" y="211.10" font-size="6.9" font-weight="normal" font-style="normal" fill="#1a1a1a" textLength="17.50" lengthAdjust="spacingAndGlyphs"  stroke="#1a1a1a" stroke-width="0.18">16.00</text>
<rect x="502.20" y="209" width="3" height="1" fill="#646464" />
<rect x="505.80" y="209" width="3" height="1" fill="#646464" />
<rect x="558.50" y="209" width="3" height="1" fill="#646464" />
<rect x="562.10" y="209" width="3" height="1" fill="#646464" />
<line x1="42" y1="224.33999999999997" x2="571" y2="224.33999999999997" stroke="#d8d8d8" stroke-width="0.8" />
<circle cx="46.9" cy="219.07" r="2.7" fill="url(#gDot)"/>
<text x="52.45" y="221.67" font-size="6.5" font-weight="normal" font-style="normal" fill="#141414" textLength="53.35" lengthAdjust="spacingAndGlyphs"  stroke="#141414" stroke-width="0.18">ACC COOR (USTF)</text>
<text x="240.45" y="221.67" font-size="6.5" font-weight="normal" font-style="normal" fill="#141414" textLength="8.35" lengthAdjust="spacingAndGlyphs"  stroke="#141414" stroke-width="0.18">AC</text>
<rect x="327.10" y="219" width="3" height="1" fill="#646464" />
<rect x="330.70" y="219" width="3" height="1" fill="#646464" />
<rect x="385.00" y="219" width="3" height="1" fill="#646464" />
<rect x="388.60" y="219" width="3" height="1" fill="#646464" />
<text x="432.20" y="221.67" font-size="6.9" font-weight="normal" font-style="normal" fill="#1a1a1a" textLength="17.50" lengthAdjust="spacingAndGlyphs"  stroke="#1a1a1a" stroke-width="0.18">16.00</text>
<rect x="502.20" y="219" width="3" height="1" fill="#646464" />
<rect x="505.80" y="219" width="3" height="1" fill="#646464" />
<rect x="558.50" y="219" width="3" height="1" fill="#646464" />
<rect x="562.10" y="219" width="3" height="1" fill="#646464" />
<line x1="42" y1="234.90999999999997" x2="571" y2="234.90999999999997" stroke="#d8d8d8" stroke-width="0.8" />
<circle cx="46.9" cy="229.64" r="2.7" fill="url(#gDot)"/>
<text x="52.45" y="232.24" font-size="6.5" font-weight="normal" font-style="normal" fill="#141414" textLength="42.35" lengthAdjust="spacingAndGlyphs"  stroke="#141414" stroke-width="0.18">PHOTO (USTF)</text>
<text x="240.45" y="232.24" font-size="6.5" font-weight="normal" font-style="normal" fill="#141414" textLength="13.10" lengthAdjust="spacingAndGlyphs"  stroke="#141414" stroke-width="0.18">PHO</text>
<rect x="327.10" y="230" width="3" height="1" fill="#646464" />
<rect x="330.70" y="230" width="3" height="1" fill="#646464" />
<rect x="385.00" y="230" width="3" height="1" fill="#646464" />
<rect x="388.60" y="230" width="3" height="1" fill="#646464" />
<text x="432.20" y="232.24" font-size="6.9" font-weight="normal" font-style="normal" fill="#1a1a1a" textLength="17.50" lengthAdjust="spacingAndGlyphs"  stroke="#1a1a1a" stroke-width="0.18">16.00</text>
<rect x="502.20" y="230" width="3" height="1" fill="#646464" />
<rect x="505.80" y="230" width="3" height="1" fill="#646464" />
<rect x="558.50" y="230" width="3" height="1" fill="#646464" />
<rect x="562.10" y="230" width="3" height="1" fill="#646464" />
<line x1="42" y1="245.48" x2="571" y2="245.48" stroke="#d8d8d8" stroke-width="0.8" />
<circle cx="46.9" cy="240.21" r="2.7" fill="url(#gDot)"/>
<text x="52.45" y="242.81" font-size="6.5" font-weight="normal" font-style="normal" fill="#141414" textLength="32.85" lengthAdjust="spacingAndGlyphs"  stroke="#141414" stroke-width="0.18">ART (USTF)</text>
<text x="240.45" y="242.81" font-size="6.5" font-weight="normal" font-style="normal" fill="#141414" textLength="12.35" lengthAdjust="spacingAndGlyphs"  stroke="#141414" stroke-width="0.18">ART</text>
<rect x="327.10" y="240" width="3" height="1" fill="#646464" />
<rect x="330.70" y="240" width="3" height="1" fill="#646464" />
<rect x="385.00" y="240" width="3" height="1" fill="#646464" />
<rect x="388.60" y="240" width="3" height="1" fill="#646464" />
<text x="432.20" y="242.81" font-size="6.9" font-weight="normal" font-style="normal" fill="#1a1a1a" textLength="17.50" lengthAdjust="spacingAndGlyphs"  stroke="#1a1a1a" stroke-width="0.18">16.00</text>
<rect x="502.20" y="240" width="3" height="1" fill="#646464" />
<rect x="505.80" y="240" width="3" height="1" fill="#646464" />
<rect x="558.50" y="240" width="3" height="1" fill="#646464" />
<rect x="562.10" y="240" width="3" height="1" fill="#646464" />
<line x1="42" y1="256.05" x2="571" y2="256.05" stroke="#d8d8d8" stroke-width="0.8" />
<circle cx="46.9" cy="250.78" r="2.7" fill="url(#gDot)"/>
<text x="52.45" y="253.38" font-size="6.5" font-weight="normal" font-style="normal" fill="#141414" textLength="46.10" lengthAdjust="spacingAndGlyphs"  stroke="#141414" stroke-width="0.18">CAMERA (USTF)</text>
<text x="240.45" y="253.38" font-size="6.5" font-weight="normal" font-style="normal" fill="#141414" textLength="13.85" lengthAdjust="spacingAndGlyphs"  stroke="#141414" stroke-width="0.18">CAM</text>
<rect x="327.10" y="251" width="3" height="1" fill="#646464" />
<rect x="330.70" y="251" width="3" height="1" fill="#646464" />
<rect x="385.00" y="251" width="3" height="1" fill="#646464" />
<rect x="388.60" y="251" width="3" height="1" fill="#646464" />
<text x="432.20" y="253.38" font-size="6.9" font-weight="normal" font-style="normal" fill="#1a1a1a" textLength="17.50" lengthAdjust="spacingAndGlyphs"  stroke="#1a1a1a" stroke-width="0.18">16.00</text>
<rect x="502.20" y="251" width="3" height="1" fill="#646464" />
<rect x="505.80" y="251" width="3" height="1" fill="#646464" />
<rect x="558.50" y="251" width="3" height="1" fill="#646464" />
<rect x="562.10" y="251" width="3" height="1" fill="#646464" />
<line x1="42" y1="266.62" x2="571" y2="266.62" stroke="#d8d8d8" stroke-width="0.8" />
<circle cx="46.9" cy="261.35" r="2.7" fill="url(#gDot)"/>
<text x="52.45" y="263.95" font-size="6.5" font-weight="normal" font-style="normal" fill="#141414" textLength="70.35" lengthAdjust="spacingAndGlyphs"  stroke="#141414" stroke-width="0.18">FREE LANCE ART (USTF)</text>
<text x="240.45" y="263.95" font-size="6.5" font-weight="normal" font-style="normal" fill="#141414" textLength="8.60" lengthAdjust="spacingAndGlyphs"  stroke="#141414" stroke-width="0.18">RH</text>
<rect x="327.10" y="261" width="3" height="1" fill="#646464" />
<rect x="330.70" y="261" width="3" height="1" fill="#646464" />
<rect x="385.00" y="261" width="3" height="1" fill="#646464" />
<rect x="388.60" y="261" width="3" height="1" fill="#646464" />
<text x="432.20" y="263.95" font-size="6.9" font-weight="normal" font-style="normal" fill="#1a1a1a" textLength="17.50" lengthAdjust="spacingAndGlyphs"  stroke="#1a1a1a" stroke-width="0.18">16.00</text>
<rect x="502.20" y="261" width="3" height="1" fill="#646464" />
<rect x="505.80" y="261" width="3" height="1" fill="#646464" />
<rect x="558.50" y="261" width="3" height="1" fill="#646464" />
<rect x="562.10" y="261" width="3" height="1" fill="#646464" />
<line x1="42" y1="277.19" x2="571" y2="277.19" stroke="#d8d8d8" stroke-width="0.8" />
<circle cx="46.9" cy="271.92" r="2.7" fill="url(#gDot)"/>
<text x="52.45" y="274.52" font-size="6.5" font-weight="normal" font-style="normal" fill="#141414" textLength="62.10" lengthAdjust="spacingAndGlyphs"  stroke="#141414" stroke-width="0.18">CREATIVE DIR (USTF)</text>
<text x="240.45" y="274.52" font-size="6.5" font-weight="normal" font-style="normal" fill="#141414" textLength="13.35" lengthAdjust="spacingAndGlyphs"  stroke="#141414" stroke-width="0.18">CCD</text>
<rect x="327.10" y="272" width="3" height="1" fill="#646464" />
<rect x="330.70" y="272" width="3" height="1" fill="#646464" />
<rect x="385.00" y="272" width="3" height="1" fill="#646464" />
<rect x="388.60" y="272" width="3" height="1" fill="#646464" />
<text x="432.20" y="274.52" font-size="6.9" font-weight="normal" font-style="normal" fill="#1a1a1a" textLength="17.50" lengthAdjust="spacingAndGlyphs"  stroke="#1a1a1a" stroke-width="0.18">16.00</text>
<rect x="502.20" y="272" width="3" height="1" fill="#646464" />
<rect x="505.80" y="272" width="3" height="1" fill="#646464" />
<rect x="558.50" y="272" width="3" height="1" fill="#646464" />
<rect x="562.10" y="272" width="3" height="1" fill="#646464" />
<line x1="42" y1="287.76" x2="571" y2="287.76" stroke="#d8d8d8" stroke-width="0.8" />
<circle cx="46.9" cy="282.49" r="2.7" fill="url(#gDot)"/>
<text x="52.45" y="285.09" font-size="6.5" font-weight="normal" font-style="normal" fill="#141414" textLength="34.85" lengthAdjust="spacingAndGlyphs"  stroke="#141414" stroke-width="0.18">PREP (USTF)</text>
<text x="240.45" y="285.09" font-size="6.5" font-weight="normal" font-style="normal" fill="#141414" textLength="11.60" lengthAdjust="spacingAndGlyphs"  stroke="#141414" stroke-width="0.18">PRP</text>
<rect x="327.10" y="282" width="3" height="1" fill="#646464" />
<rect x="330.70" y="282" width="3" height="1" fill="#646464" />
<rect x="385.00" y="282" width="3" height="1" fill="#646464" />
<rect x="388.60" y="282" width="3" height="1" fill="#646464" />
<text x="432.20" y="285.09" font-size="6.9" font-weight="normal" font-style="normal" fill="#1a1a1a" textLength="17.50" lengthAdjust="spacingAndGlyphs"  stroke="#1a1a1a" stroke-width="0.18">16.00</text>
<rect x="502.20" y="282" width="3" height="1" fill="#646464" />
<rect x="505.80" y="282" width="3" height="1" fill="#646464" />
<rect x="558.50" y="282" width="3" height="1" fill="#646464" />
<rect x="562.10" y="282" width="3" height="1" fill="#646464" />
<line x1="42" y1="298.33" x2="571" y2="298.33" stroke="#d8d8d8" stroke-width="0.8" />
<circle cx="46.9" cy="293.06" r="2.7" fill="url(#gDot)"/>
<text x="52.45" y="295.66" font-size="6.5" font-weight="normal" font-style="normal" fill="#141414" textLength="44.85" lengthAdjust="spacingAndGlyphs"  stroke="#141414" stroke-width="0.18">LAY OUT (USTF</text>
<text x="240.45" y="295.66" font-size="6.5" font-weight="normal" font-style="normal" fill="#141414" textLength="8.60" lengthAdjust="spacingAndGlyphs"  stroke="#141414" stroke-width="0.18">LO</text>
<rect x="327.10" y="293" width="3" height="1" fill="#646464" />
<rect x="330.70" y="293" width="3" height="1" fill="#646464" />
<rect x="385.00" y="293" width="3" height="1" fill="#646464" />
<rect x="388.60" y="293" width="3" height="1" fill="#646464" />
<text x="432.20" y="295.66" font-size="6.9" font-weight="normal" font-style="normal" fill="#1a1a1a" textLength="17.50" lengthAdjust="spacingAndGlyphs"  stroke="#1a1a1a" stroke-width="0.18">16.00</text>
<rect x="502.20" y="293" width="3" height="1" fill="#646464" />
<rect x="505.80" y="293" width="3" height="1" fill="#646464" />
<rect x="558.50" y="293" width="3" height="1" fill="#646464" />
<rect x="562.10" y="293" width="3" height="1" fill="#646464" />
<line x1="42" y1="308.9" x2="571" y2="308.9" stroke="#d8d8d8" stroke-width="0.8" />
<circle cx="46.9" cy="303.63" r="2.7" fill="url(#gDot)"/>
<text x="52.45" y="306.23" font-size="6.5" font-weight="normal" font-style="normal" fill="#141414" textLength="38.35" lengthAdjust="spacingAndGlyphs"  stroke="#141414" stroke-width="0.18">PRINT (USTF)</text>
<text x="240.45" y="306.23" font-size="6.5" font-weight="normal" font-style="normal" fill="#141414" textLength="11.60" lengthAdjust="spacingAndGlyphs"  stroke="#141414" stroke-width="0.18">PRP</text>
<rect x="327.10" y="304" width="3" height="1" fill="#646464" />
<rect x="330.70" y="304" width="3" height="1" fill="#646464" />
<rect x="385.00" y="304" width="3" height="1" fill="#646464" />
<rect x="388.60" y="304" width="3" height="1" fill="#646464" />
<text x="432.20" y="306.23" font-size="6.9" font-weight="normal" font-style="normal" fill="#1a1a1a" textLength="17.50" lengthAdjust="spacingAndGlyphs"  stroke="#1a1a1a" stroke-width="0.18">16.00</text>
<rect x="502.20" y="304" width="3" height="1" fill="#646464" />
<rect x="505.80" y="304" width="3" height="1" fill="#646464" />
<rect x="558.50" y="304" width="3" height="1" fill="#646464" />
<rect x="562.10" y="304" width="3" height="1" fill="#646464" />
<line x1="42" y1="319.46999999999997" x2="571" y2="319.46999999999997" stroke="#d8d8d8" stroke-width="0.8" />
<circle cx="46.9" cy="314.20" r="2.7" fill="url(#gDot)"/>
<text x="52.45" y="316.80" font-size="6.5" font-weight="normal" font-style="normal" fill="#141414" textLength="40.85" lengthAdjust="spacingAndGlyphs"  stroke="#141414" stroke-width="0.18">LABOR (USTF)</text>
<text x="240.45" y="316.80" font-size="6.5" font-weight="normal" font-style="normal" fill="#141414" textLength="13.85" lengthAdjust="spacingAndGlyphs"  stroke="#141414" stroke-width="0.18">MGR</text>
<rect x="327.10" y="314" width="3" height="1" fill="#646464" />
<rect x="330.70" y="314" width="3" height="1" fill="#646464" />
<rect x="385.00" y="314" width="3" height="1" fill="#646464" />
<rect x="388.60" y="314" width="3" height="1" fill="#646464" />
<text x="432.20" y="316.80" font-size="6.9" font-weight="normal" font-style="normal" fill="#1a1a1a" textLength="17.50" lengthAdjust="spacingAndGlyphs"  stroke="#1a1a1a" stroke-width="0.18">16.00</text>
<rect x="502.20" y="314" width="3" height="1" fill="#646464" />
<rect x="505.80" y="314" width="3" height="1" fill="#646464" />
<rect x="558.50" y="314" width="3" height="1" fill="#646464" />
<rect x="562.10" y="314" width="3" height="1" fill="#646464" />
<line x1="42" y1="330.04" x2="571" y2="330.04" stroke="#d8d8d8" stroke-width="0.8" />
<circle cx="46.9" cy="324.77" r="2.7" fill="url(#gDot)"/>
<text x="52.45" y="327.37" font-size="6.5" font-weight="normal" font-style="normal" fill="#141414" textLength="34.10" lengthAdjust="spacingAndGlyphs"  stroke="#141414" stroke-width="0.18">MED (USTF)</text>
<text x="240.45" y="327.37" font-size="6.5" font-weight="normal" font-style="normal" fill="#141414" textLength="13.35" lengthAdjust="spacingAndGlyphs"  stroke="#141414" stroke-width="0.18">CCD</text>
<rect x="327.10" y="325" width="3" height="1" fill="#646464" />
<rect x="330.70" y="325" width="3" height="1" fill="#646464" />
<rect x="385.00" y="325" width="3" height="1" fill="#646464" />
<rect x="388.60" y="325" width="3" height="1" fill="#646464" />
<text x="432.20" y="327.37" font-size="6.9" font-weight="normal" font-style="normal" fill="#1a1a1a" textLength="17.50" lengthAdjust="spacingAndGlyphs"  stroke="#1a1a1a" stroke-width="0.18">16.00</text>
<rect x="502.20" y="325" width="3" height="1" fill="#646464" />
<rect x="505.80" y="325" width="3" height="1" fill="#646464" />
<rect x="558.50" y="325" width="3" height="1" fill="#646464" />
<rect x="562.10" y="325" width="3" height="1" fill="#646464" />
<line x1="42" y1="340.60999999999996" x2="571" y2="340.60999999999996" stroke="#d8d8d8" stroke-width="0.8" />
<circle cx="46.9" cy="335.34" r="2.7" fill="url(#gDot)"/>
<text x="52.45" y="337.94" font-size="6.5" font-weight="normal" font-style="normal" fill="#141414" textLength="110.85" lengthAdjust="spacingAndGlyphs"  stroke="#141414" stroke-width="0.18">INTERACTIVE WEB PLACEMENT (USTF)</text>
<text x="240.45" y="337.94" font-size="6.5" font-weight="normal" font-style="normal" fill="#141414" textLength="13.35" lengthAdjust="spacingAndGlyphs"  stroke="#141414" stroke-width="0.18">CCD</text>
<rect x="327.10" y="335" width="3" height="1" fill="#646464" />
<rect x="330.70" y="335" width="3" height="1" fill="#646464" />
<rect x="385.00" y="335" width="3" height="1" fill="#646464" />
<rect x="388.60" y="335" width="3" height="1" fill="#646464" />
<text x="432.20" y="337.94" font-size="6.9" font-weight="normal" font-style="normal" fill="#1a1a1a" textLength="17.50" lengthAdjust="spacingAndGlyphs"  stroke="#1a1a1a" stroke-width="0.18">16.00</text>
<rect x="502.20" y="335" width="3" height="1" fill="#646464" />
<rect x="505.80" y="335" width="3" height="1" fill="#646464" />
<rect x="558.50" y="335" width="3" height="1" fill="#646464" />
<rect x="562.10" y="335" width="3" height="1" fill="#646464" />
<line x1="42" y1="351.18" x2="571" y2="351.18" stroke="#d8d8d8" stroke-width="0.8" />
<circle cx="46.9" cy="345.91" r="2.7" fill="url(#gDot)"/>
<text x="52.45" y="348.51" font-size="6.5" font-weight="normal" font-style="normal" fill="#141414" textLength="93.35" lengthAdjust="spacingAndGlyphs"  stroke="#141414" stroke-width="0.18">OUTDOOR ADVERTISING (USTF)</text>
<text x="240.45" y="348.51" font-size="6.5" font-weight="normal" font-style="normal" fill="#141414" textLength="13.35" lengthAdjust="spacingAndGlyphs"  stroke="#141414" stroke-width="0.18">CCD</text>
<rect x="327.10" y="346" width="3" height="1" fill="#646464" />
<rect x="330.70" y="346" width="3" height="1" fill="#646464" />
<rect x="385.00" y="346" width="3" height="1" fill="#646464" />
<rect x="388.60" y="346" width="3" height="1" fill="#646464" />
<text x="432.20" y="348.51" font-size="6.9" font-weight="normal" font-style="normal" fill="#1a1a1a" textLength="17.50" lengthAdjust="spacingAndGlyphs"  stroke="#1a1a1a" stroke-width="0.18">16.00</text>
<rect x="502.20" y="346" width="3" height="1" fill="#646464" />
<rect x="505.80" y="346" width="3" height="1" fill="#646464" />
<rect x="558.50" y="346" width="3" height="1" fill="#646464" />
<rect x="562.10" y="346" width="3" height="1" fill="#646464" />
<line x1="42" y1="361.75" x2="571" y2="361.75" stroke="#d8d8d8" stroke-width="0.8" />
<circle cx="46.9" cy="356.48" r="2.7" fill="url(#gDot)"/>
<text x="52.45" y="359.08" font-size="6.5" font-weight="normal" font-style="normal" fill="#141414" textLength="53.60" lengthAdjust="spacingAndGlyphs"  stroke="#141414" stroke-width="0.18">DELIVERIES (USTF)</text>
<rect x="241.20" y="356" width="3" height="1" fill="#646464" />
<rect x="244.80" y="356" width="3" height="1" fill="#646464" />
<rect x="327.10" y="356" width="3" height="1" fill="#646464" />
<rect x="330.70" y="356" width="3" height="1" fill="#646464" />
<rect x="385.00" y="356" width="3" height="1" fill="#646464" />
<rect x="388.60" y="356" width="3" height="1" fill="#646464" />
<text x="432.20" y="359.08" font-size="6.9" font-weight="normal" font-style="normal" fill="#1a1a1a" textLength="17.50" lengthAdjust="spacingAndGlyphs"  stroke="#1a1a1a" stroke-width="0.18">16.00</text>
<rect x="502.20" y="356" width="3" height="1" fill="#646464" />
<rect x="505.80" y="356" width="3" height="1" fill="#646464" />
<rect x="558.50" y="356" width="3" height="1" fill="#646464" />
<rect x="562.10" y="356" width="3" height="1" fill="#646464" />
<line x1="42" y1="372.32" x2="571" y2="372.32" stroke="#d8d8d8" stroke-width="0.8" />
<circle cx="46.9" cy="367.05" r="2.7" fill="url(#gDot)"/>
<text x="52.45" y="369.65" font-size="6.5" font-weight="normal" font-style="normal" fill="#141414" textLength="64.10" lengthAdjust="spacingAndGlyphs"  stroke="#141414" stroke-width="0.18">MISCELLAIOUS (USTF)</text>
<rect x="241.20" y="367" width="3" height="1" fill="#646464" />
<rect x="244.80" y="367" width="3" height="1" fill="#646464" />
<rect x="327.10" y="367" width="3" height="1" fill="#646464" />
<rect x="330.70" y="367" width="3" height="1" fill="#646464" />
<rect x="385.00" y="367" width="3" height="1" fill="#646464" />
<rect x="388.60" y="367" width="3" height="1" fill="#646464" />
<text x="432.20" y="369.65" font-size="6.9" font-weight="normal" font-style="normal" fill="#1a1a1a" textLength="17.50" lengthAdjust="spacingAndGlyphs"  stroke="#1a1a1a" stroke-width="0.18">16.00</text>
<rect x="502.20" y="367" width="3" height="1" fill="#646464" />
<rect x="505.80" y="367" width="3" height="1" fill="#646464" />
<rect x="558.50" y="367" width="3" height="1" fill="#646464" />
<rect x="562.10" y="367" width="3" height="1" fill="#646464" />
<line x1="172.5" y1="203.2" x2="172.5" y2="410" stroke="#b4b4b4" stroke-width="0.8" />
<line x1="237.2" y1="203.2" x2="237.2" y2="410" stroke="#b4b4b4" stroke-width="0.8" />
<line x1="281.5" y1="203.2" x2="281.5" y2="410" stroke="#b4b4b4" stroke-width="0.8" />
<line x1="337.6" y1="203.2" x2="337.6" y2="410" stroke="#b4b4b4" stroke-width="0.8" />
<line x1="396.5" y1="203.2" x2="396.5" y2="410" stroke="#b4b4b4" stroke-width="0.8" />
<line x1="453.2" y1="203.2" x2="453.2" y2="410" stroke="#b4b4b4" stroke-width="0.8" />
<line x1="512" y1="203.2" x2="512" y2="410" stroke="#b4b4b4" stroke-width="0.8" />
<line x1="42" y1="410" x2="571" y2="410" stroke="#c8c8c8" stroke-width="0.6" />
<rect x="570.8" y="203.6" width="8.6" height="206.4" fill="url(#gScroll)" />
<line x1="42" y1="203.2" x2="579.4" y2="203.2" stroke="#a0a0a0" stroke-width="0.8" />
<text x="421.20" y="417.60" font-size="7.0" font-weight="normal" font-style="normal" fill="#1a1a1a" textLength="20.10" lengthAdjust="spacingAndGlyphs"  stroke="#1a1a1a" stroke-width="0.3">256.00</text>
<rect x="592.2" y="204" width="139.3" height="206" fill="#ffffff" rx="3" stroke="#c8c8c6" stroke-width="0.5" />
<text x="596.40" y="214.20" font-size="6.6" font-weight="normal" font-style="normal" fill="#141414" textLength="128.90" lengthAdjust="spacingAndGlyphs"  stroke="#141414" stroke-width="0.18">LAY OUT CUT AND PASTE FOR PRINT WORK</text>
<text x="586.00" y="259.40" font-size="6.6" font-weight="normal" font-style="normal" fill="#222"  stroke="#222" stroke-width="0.15">&lt;</text>
<text x="42.45" y="437.60" font-size="7.0" font-weight="normal" font-style="normal" fill="#202020" textLength="41.60" lengthAdjust="spacingAndGlyphs"  stroke="#202020" stroke-width="0.32">Next Deadline:</text>
<text x="90.50" y="437.60" font-size="7" font-weight="normal" font-style="normal" fill="#333" >-</text>
<line x1="88.8" y1="440.3" x2="236" y2="440.3" stroke="#a8a8a6" stroke-width="0.9" />
<rect x="241.6" y="432.3" width="8" height="8.1" fill="url(#gBtn)" rx="1.5" stroke="#8a8a88" stroke-width="0.7" />
<path d="M246.9,434.35 L244.1,436.35 L246.9,438.35 Z" fill="#111"/>
<rect x="252.9" y="432.3" width="8" height="8.1" fill="url(#gBtn)" rx="1.5" stroke="#8a8a88" stroke-width="0.7" />
<path d="M255.59999999999997,434.35 L258.4,436.35 L255.59999999999997,438.35 Z" fill="#111"/>
<rect x="265" y="435" width="8" height="4" rx="1" fill="#2a2a2a"/><rect x="266.3" y="433.2" width="5.4" height="2" fill="#555"/><rect x="266.3" y="438.2" width="5.4" height="1.3" fill="#888"/>
<text x="282.70" y="438.10" font-size="7.0" font-weight="normal" font-style="normal" fill="#202020" textLength="52.30" lengthAdjust="spacingAndGlyphs"  stroke="#202020" stroke-width="0.32">Production Status:</text>
<path d="M339.6,436 L341.6,433 L343.6,436 Z M339.6,437 L341.6,440 L343.6,437 Z" fill="#3a8ae0"/>
<text x="348.50" y="438.10" font-size="7.2" font-weight="normal" font-style="normal" fill="#1a1a1a" textLength="24.50" lengthAdjust="spacingAndGlyphs"  stroke="#1a1a1a" stroke-width="0.3">New (1)</text>
<line x1="348.8" y1="441" x2="556" y2="441" stroke="#a8a8a6" stroke-width="0.9" />
<text x="569.70" y="439.80" font-size="7.0" font-weight="normal" font-style="normal" fill="#202020" textLength="31.20" lengthAdjust="spacingAndGlyphs"  stroke="#202020" stroke-width="0.32">drill down:</text>
<rect x="606.3" y="431.4" width="112.30000000000007" height="12.200000000000045" fill="url(#gPop)" rx="2.5" stroke="#7a7a78" stroke-width="0.8" />
<path d="M707.1,431.4 H716.1 Q718.6,431.4 718.6,433.9 V441.1 Q718.6,443.6 716.1,443.6 H707.1 Z" fill="url(#gSegB)" stroke="#4e5a94" stroke-width="0.8"/>
<path d="M711.45,436.5 L712.85,434.5 L714.25,436.5 Z M711.45,438.5 L712.85,440.5 L714.25,438.5 Z" fill="#111"/>
<text x="610.30" y="439.60" font-size="7.4" font-weight="normal" font-style="normal" fill="#141414" textLength="29.75" lengthAdjust="spacingAndGlyphs"  stroke="#141414" stroke-width="0.18">Click here</text>
<line x1="751" y1="448.5" x2="753.5" y2="446.0" stroke="#a0a0a0" stroke-width="0.6" />
<line x1="748" y1="448.5" x2="753.5" y2="443.0" stroke="#a0a0a0" stroke-width="0.6" />
<line x1="745" y1="448.5" x2="753.5" y2="440.0" stroke="#a0a0a0" stroke-width="0.6" />
</svg>
</body></html>
